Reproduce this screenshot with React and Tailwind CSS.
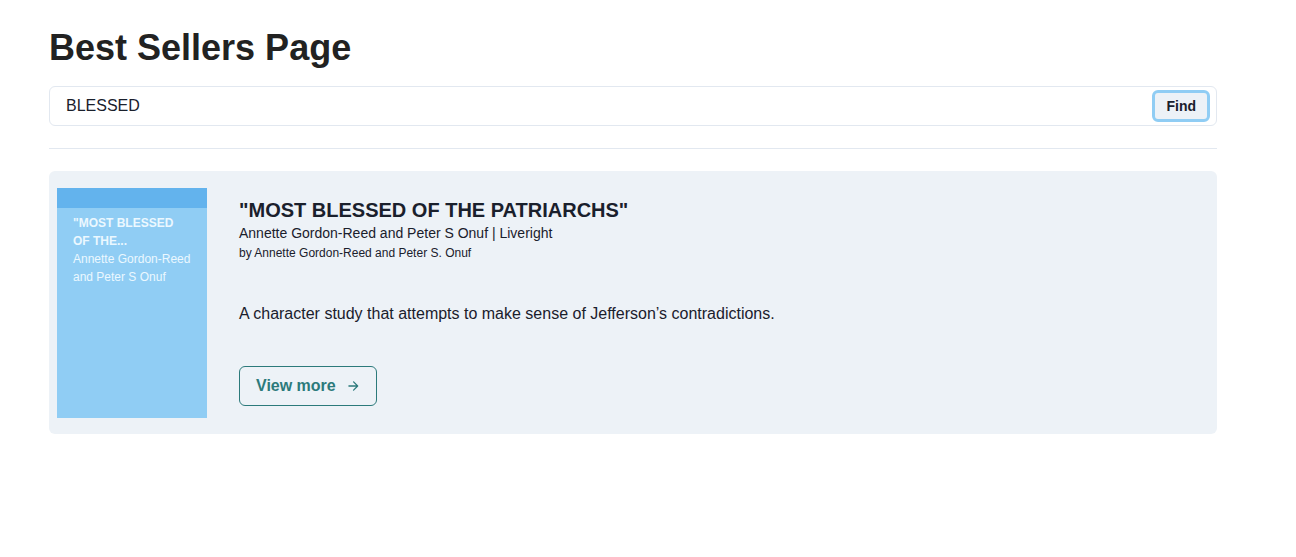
import React from "react";

const book = {
  title: '"MOST BLESSED OF THE PATRIARCHS"',
  author: "Annette Gordon-Reed and Peter S Onuf",
  publisher: "Liveright",
  contributor: "by Annette Gordon-Reed and Peter S. Onuf",
  description: "A character study that attempts to make sense of Jefferson\u2019s contradictions.",
};

function Cover() {
  return (
    <div className="w-[150px] h-[230px] shrink-0 bg-[#90cdf4] flex flex-col">
      <div className="h-[20px] bg-[#63b3ed]" />
      <div className="px-4 pt-[6px] text-[12px] leading-[18px] text-[#ebf8ff]">
        <div className="font-bold">"MOST BLESSED</div>
        <div className="font-bold">OF THE...</div>
        <div>Annette Gordon-Reed</div>
        <div>and Peter S Onuf</div>
      </div>
    </div>
  );
}

function BookCard({ book }) {
  return (
    <div className="flex bg-[#edf2f7] rounded-md pl-2 pt-[17px] pb-4">
      <Cover />
      <div className="pl-8 pt-[10px] flex flex-col">
        <h2 className="text-[20px] leading-[24px] font-bold text-[#1a202c]">{book.title}</h2>
        <p className="mt-px text-[14px] leading-[20px] text-[#1a202c]">
          {book.author} | {book.publisher}
        </p>
        <p className="text-[12px] leading-[20px] text-[#1a202c]">{book.contributor}</p>
        <p className="mt-[39px] text-[16px] leading-[24px] text-[#1a202c]">{book.description}</p>
        <div className="mt-[40px]">
          <button className="h-10 px-4 border border-[#2c7a7b] rounded-md text-[#2c7a7b] font-bold text-[16px] flex items-center gap-[10px]">
            View more
            <svg width="14" height="14" viewBox="0 0 24 24" fill="none" stroke="currentColor" strokeWidth="2.2" strokeLinecap="round" strokeLinejoin="round">
              <path d="M5 12h14M13 5l7 7-7 7" />
            </svg>
          </button>
        </div>
      </div>
    </div>
  );
}

export default function App() {
  return (
    <div className="min-h-screen bg-white font-['Liberation_Sans',Arial,sans-serif] text-[#1a202c]">
      <div className="w-[1168px] ml-[49px] pt-[28px]">
        <h1 className="text-[36px] leading-[40px] font-bold text-[#222]">Best Sellers Page</h1>
        <div className="mt-[18px] h-10 border border-[#e2e8f0] rounded-md flex items-center pl-4 pr-[6px]">
          <input
            className="flex-1 outline-none text-[16px] bg-transparent text-[#1a202c]"
            defaultValue="BLESSED"
          />
          <button className="h-8 px-[11px] rounded-md bg-[#edf2f7] border-[3px] border-[#90cdf4] text-[14px] font-bold text-[#1a202c]">
            Find
          </button>
        </div>
        <hr className="mt-[22px] border-[#e2e8f0]" />
        <div className="mt-[22px]">
          <BookCard book={book} />
        </div>
      </div>
    </div>
  );
}
